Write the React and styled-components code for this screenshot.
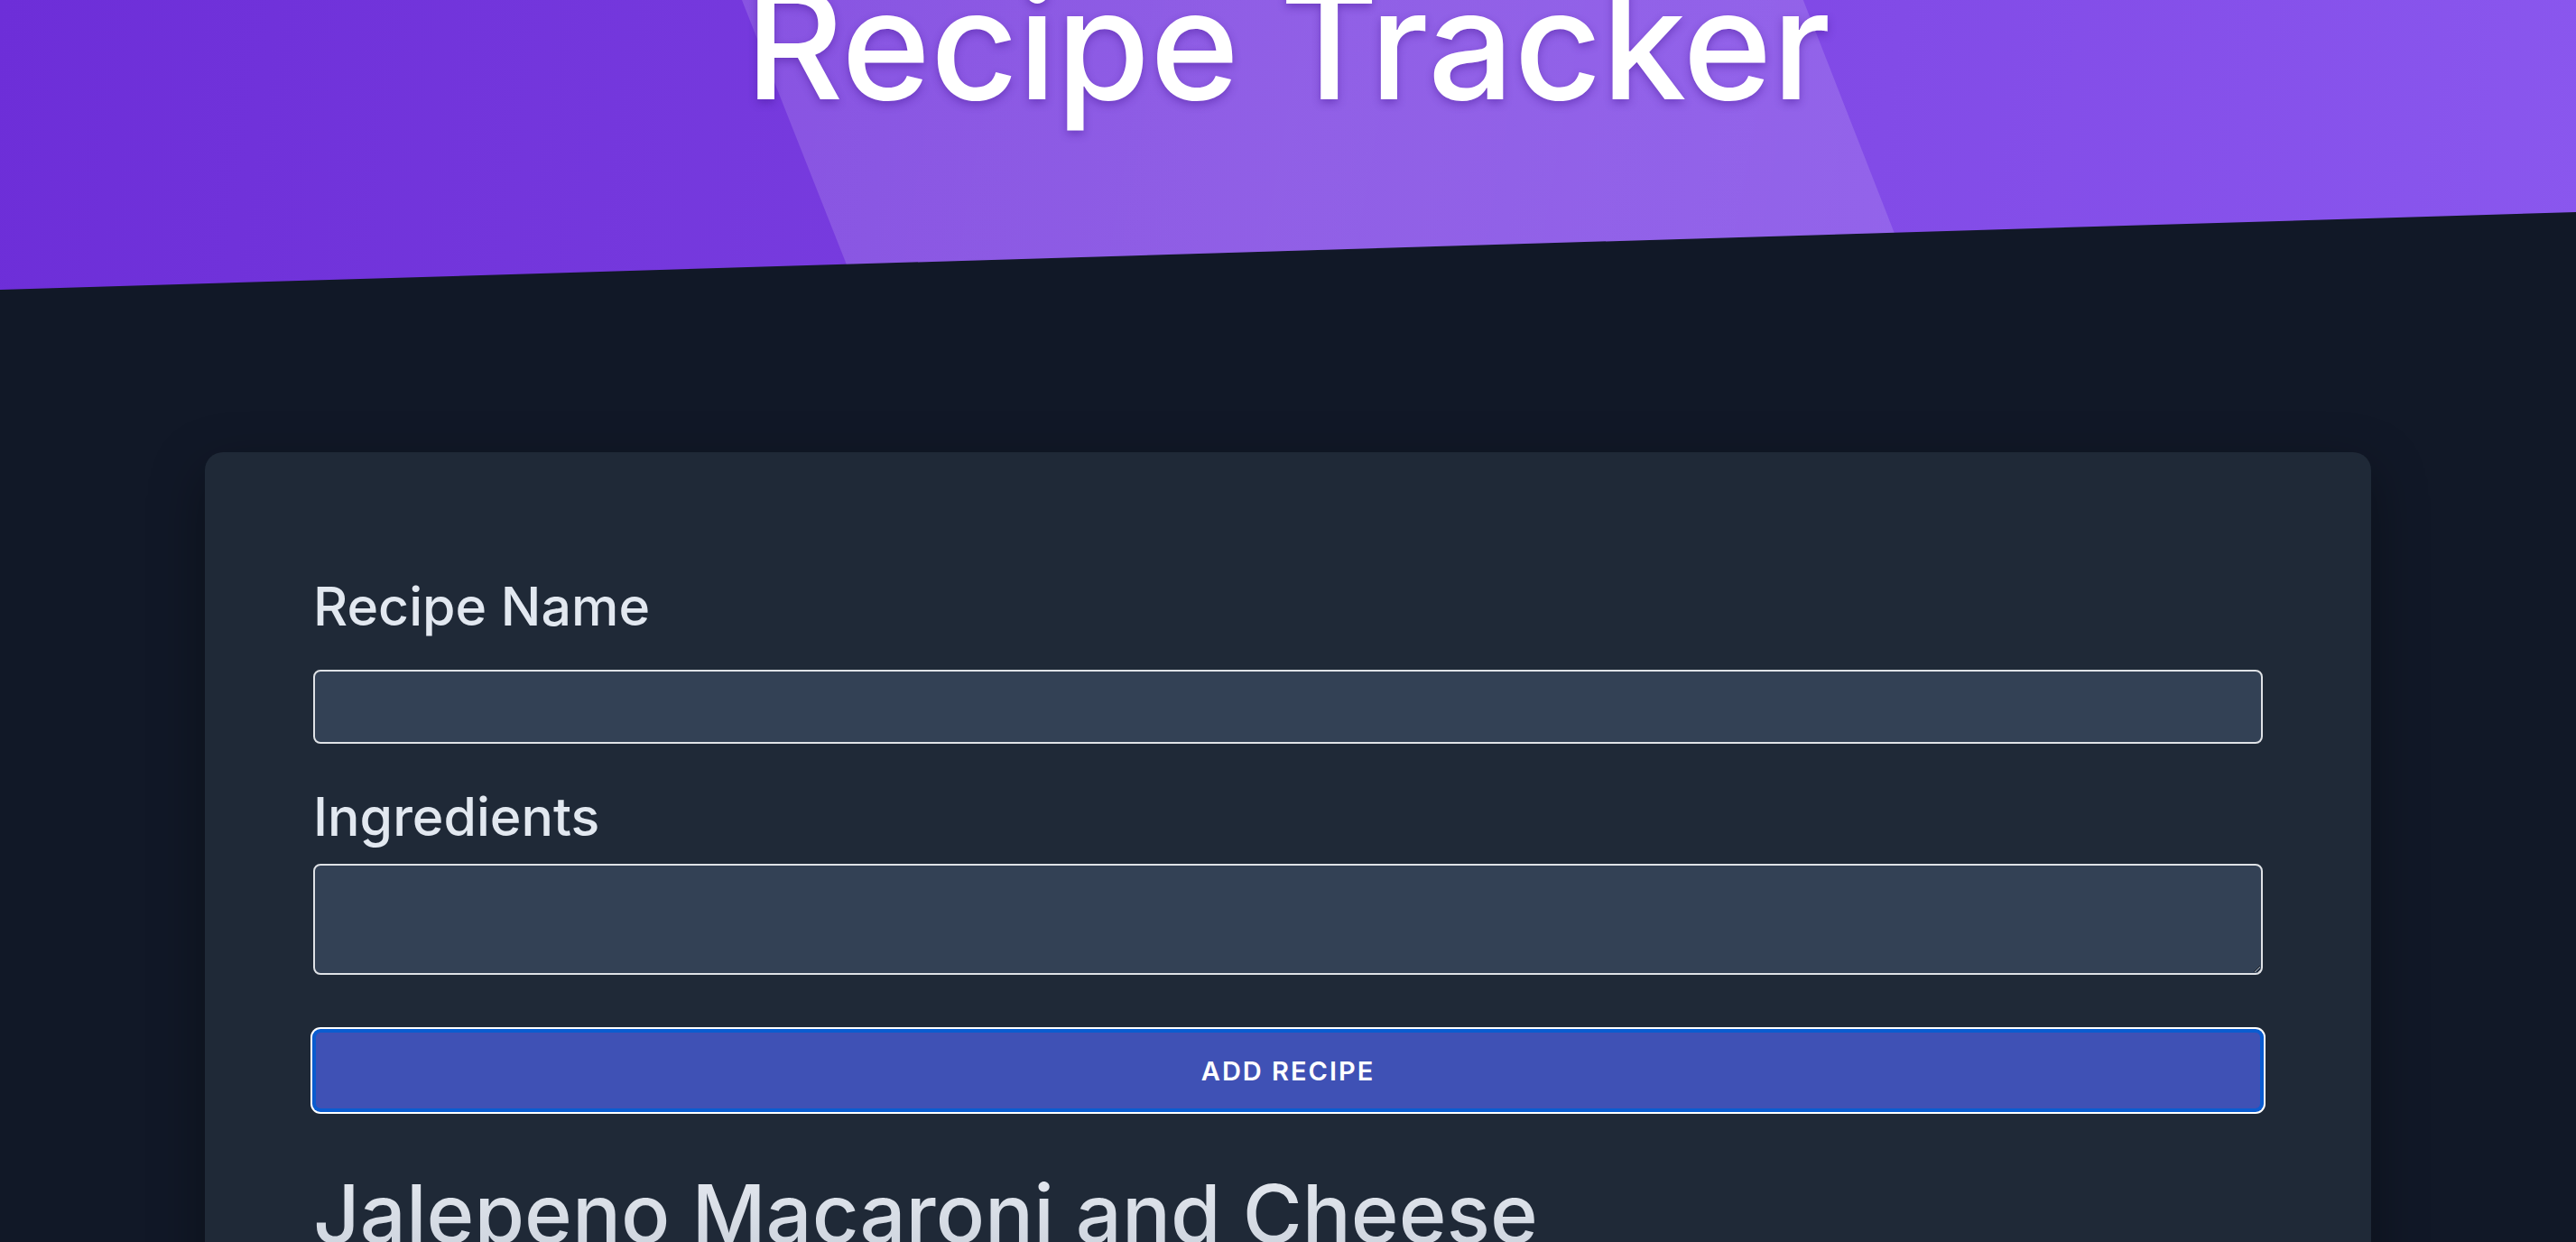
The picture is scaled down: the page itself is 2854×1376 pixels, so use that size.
import React from 'react';
import styled, { createGlobalStyle } from 'styled-components';

const GlobalStyle = createGlobalStyle`
  html, body {
    margin: 0;
    padding: 0;
    background: #111827;
    font-family: Inter, "Noto Sans", sans-serif;
  }
  * { box-sizing: border-box; }
`

const Header = styled.header`
  position: relative;
  height: 321px;
  overflow: hidden;
  background: linear-gradient(100deg, #6d2ed8 0%, #7a3fe0 45%, #8a57ee 100%);
  clip-path: polygon(0 0, 100% 0, 100% 235px, 0 321px);

  &::before {
    content: '';
    position: absolute;
    inset: 0;
    background: linear-gradient(100deg, rgba(255,255,255,0.10), rgba(255,255,255,0.16) 50%, rgba(255,255,255,0.10));
    clip-path: polygon(28.8% 0, 70% 0, 74.4% 100%, 33.25% 100%);
  }
`

const Title = styled.h1`
  position: relative;
  margin: -35px 0 0;
  text-align: center;
  font-size: 168px;
  line-height: 1;
  font-weight: 500;
  color: #fff;
  text-shadow: 0 4px 10px rgba(70, 25, 150, 0.45);
`

const Main = styled.main`
  padding: 180px 0 200px;
`

const Card = styled.section`
  width: 2400px;
  margin: 0 auto;
  padding: 135px 120px 120px;
  background: #1f2937;
  border-radius: 20px;
  box-shadow: 0 20px 60px rgba(0, 0, 0, 0.35);
`

const Label = styled.label`
  display: block;
  font-size: 59px;
  line-height: 71px;
  font-weight: 500;
  color: #e2e8f0;
  margin: ${p => p.$top || 0}px 0 ${p => p.$bottom || 0}px;
`

const Input = styled.input`
  display: block;
  width: 100%;
  height: 82px;
  background: #334155;
  border: 2px solid #dfe2e6;
  border-radius: 8px;
  color: #e2e8f0;
  font: inherit;
  font-size: 32px;
  padding: 0 20px;
`

const TextArea = styled.textarea`
  display: block;
  width: 100%;
  height: 123px;
  background: #334155;
  border: 2px solid #dfe2e6;
  border-radius: 8px;
  color: #e2e8f0;
  font: inherit;
  font-size: 32px;
  padding: 12px 20px;
  resize: vertical;
`

const Button = styled.button`
  display: block;
  width: 100%;
  height: 90px;
  margin-top: 61px;
  background: #3f51b5;
  border: 3px solid #0a5cd0;
  border-radius: 8px;
  box-shadow: 0 0 0 1px #0a5cd0, 0 0 0 3px #ffffff;
  color: #fff;
  font-family: Inter, sans-serif;
  font-size: 29px;
  font-weight: 600;
  letter-spacing: 2px;
  text-transform: uppercase;
  cursor: pointer;
`

const RecipeTitle = styled.h2`
  margin: 60px 0 0;
  font-size: 90px;
  line-height: 1.2;
  font-weight: 500;
  background: linear-gradient(180deg, #e5e9f0 0%, #cbd2dc 100%);
  -webkit-background-clip: text;
  background-clip: text;
  color: transparent;
`

const App = () => {
  return (
    <>
      <GlobalStyle />
      <Header>
        <Title>Recipe Tracker</Title>
      </Header>
      <Main>
        <Card>
          <Label htmlFor="name" $bottom={35}>Recipe Name</Label>
          <Input id="name" type="text" />
          <Label htmlFor="ingredients" $top={45} $bottom={17}>Ingredients</Label>
          <TextArea id="ingredients" />
          <Button>Add Recipe</Button>
          <RecipeTitle>Jalepeno Macaroni and Cheese</RecipeTitle>
        </Card>
      </Main>
    </>
  )
}

export default App
